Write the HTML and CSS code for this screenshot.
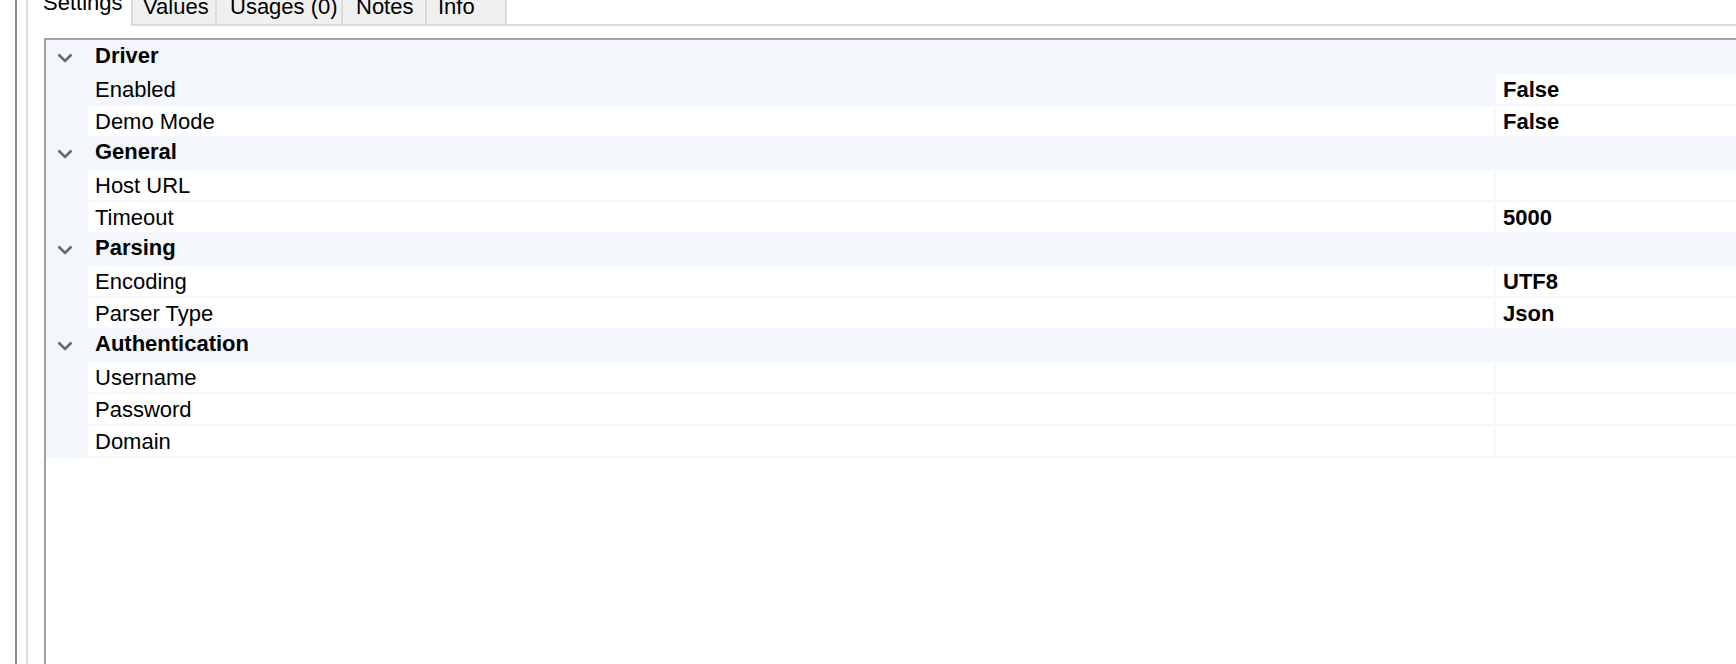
FILE: index.html
```
<html>

<head>
    <link rel="stylesheet" href="styles.css">
</head>

<body>
    <div class="frame">
        <div class="side"></div>
        <div class="panel">
            <div class="tabs">
                <div class="tab active">Settings</div>
                <div class="tab tab-values">Values</div>
                <div class="tab tab-usages">Usages (0)</div>
                <div class="tab tab-notes">Notes</div>
                <div class="tab tab-info">Info</div>
                <div class="tab-fill"></div>
            </div>
            <div class="page">
                <div class="grid">
                    <div class="rows">
                        <div class="cat">
                            <div class="chev"><svg width="16" height="10" viewBox="0 0 16 10"><polyline points="1.5,1.5 8,8 14.5,1.5" /></svg></div>
                            <div class="cat-name">Driver</div>
                        </div>
                        <div class="prop">
                            <div class="pname sel">Enabled</div>
                            <div class="pval">False</div>
                        </div>
                        <div class="prop">
                            <div class="pname">Demo Mode</div>
                            <div class="pval">False</div>
                        </div>

                        <div class="cat">
                            <div class="chev"><svg width="16" height="10" viewBox="0 0 16 10"><polyline points="1.5,1.5 8,8 14.5,1.5" /></svg></div>
                            <div class="cat-name">General</div>
                        </div>
                        <div class="prop">
                            <div class="pname">Host URL</div>
                            <div class="pval"></div>
                        </div>
                        <div class="prop">
                            <div class="pname">Timeout</div>
                            <div class="pval">5000</div>
                        </div>

                        <div class="cat">
                            <div class="chev"><svg width="16" height="10" viewBox="0 0 16 10"><polyline points="1.5,1.5 8,8 14.5,1.5" /></svg></div>
                            <div class="cat-name">Parsing</div>
                        </div>
                        <div class="prop">
                            <div class="pname">Encoding</div>
                            <div class="pval">UTF8</div>
                        </div>
                        <div class="prop">
                            <div class="pname">Parser Type</div>
                            <div class="pval">Json</div>
                        </div>

                        <div class="cat">
                            <div class="chev"><svg width="16" height="10" viewBox="0 0 16 10"><polyline points="1.5,1.5 8,8 14.5,1.5" /></svg></div>
                            <div class="cat-name">Authentication</div>
                        </div>
                        <div class="prop">
                            <div class="pname">Username</div>
                            <div class="pval"></div>
                        </div>
                        <div class="prop">
                            <div class="pname">Password</div>
                            <div class="pval"></div>
                        </div>
                        <div class="prop">
                            <div class="pname">Domain</div>
                            <div class="pval"></div>
                        </div>
                    </div>
                </div>
            </div>
        </div>
    </div>
</body>

</html>
```

FILE: styles.css
```
:root {
    --line: #f3f6fb;
    --tabline: #dadada;
}

body {
    margin: 0;
    background-color: white;
    font-family: "Liberation Sans", Arial, sans-serif;
    font-size: 22px;
    color: black;
    overflow: hidden;
}

.frame {
    display: flex;
    height: 664px;
    overflow: hidden;
}

.side {
    width: 15px;
    border-right: 2px solid #878b93;
    margin-right: 9px;
}

.panel {
    flex: 1;
    min-width: 0;
    display: flex;
    flex-direction: column;
    border-left: 2px solid #dcdcdc;
}

/* タブ (上端は画面外) */
.tabs {
    display: flex;
    align-items: flex-end;
    height: 34px;
    margin-top: -8px;
}

.tab {
    box-sizing: border-box;
    height: 34px;
    line-height: 30px;
    background-color: #f0f0f0;
    border-right: 2px solid var(--tabline);
    border-bottom: 2px solid var(--tabline);
    white-space: nowrap;
}

.tab.active {
    width: 103px;
    padding-left: 15px;
    line-height: 22px;
    background-color: white;
    border: none;
}

.tab-values {
    width: 86px;
    padding-left: 10px;
    border-left: 2px solid var(--tabline);
}

.tab-usages {
    width: 126px;
    padding-left: 13px;
}

.tab-notes {
    width: 84px;
    padding-left: 13px;
}

.tab-info {
    width: 80px;
    padding-left: 11px;
}

.tab-fill {
    flex: 1;
    height: 2px;
    background-color: var(--tabline);
}

/* プロパティグリッド */
.page {
    flex: 1;
    display: flex;
    padding: 12px 0 0 16px;
}

.grid {
    flex: 1;
    border-left: 2px solid #a0a0a0;
    border-top: 2px solid #a0a0a0;
    background-color: white;
}

.rows {
    background-color: var(--line);
    padding-bottom: 2px;
}

.cat {
    display: flex;
    box-sizing: border-box;
    height: 32px;
    padding-top: 2px;
    line-height: 28px;
    font-weight: bold;
}

.chev {
    width: 31px;
    padding-left: 11px;
    padding-top: 11px;
    line-height: 0;
}

.chev polyline {
    fill: none;
    stroke: #666a70;
    stroke-width: 2.6;
}

.cat-name {
    padding-left: 7px;
}

.prop {
    display: flex;
    height: 30px;
    line-height: 28px;
    margin-top: 2px;
}

.pname,
.pval {
    padding-top: 2px;
    background-color: white;
}

.pname {
    flex: 1;
    margin-left: 42px;
    padding-left: 7px;
}

.pname.sel {
    background-color: var(--line);
}

.pval {
    width: 233px;
    margin-left: 2px;
    padding-left: 7px;
    font-weight: bold;
}
```
